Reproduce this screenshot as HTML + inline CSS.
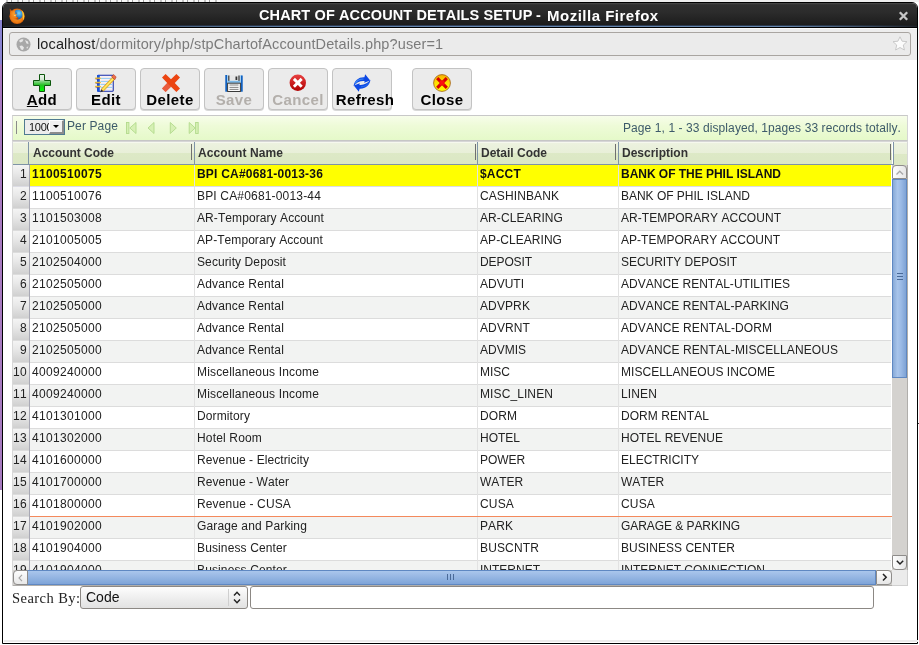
<!DOCTYPE html>
<html><head><meta charset="utf-8">
<style>
*{margin:0;padding:0;box-sizing:border-box}
html,body{width:919px;height:645px;overflow:hidden;background:#fff;font-family:"Liberation Sans",sans-serif;font-kerning:none}
body{position:relative}
#wrap{position:absolute;left:0;top:0;width:919px;height:645px;overflow:hidden;will-change:transform}
.a{position:absolute}
#purple{left:0;top:20px;width:2px;height:470px;background:linear-gradient(#8a84d2 0,#8a84d2 44px,#a87ac0 45px,#a67abf 100%)}
#bgtop{left:0;top:14px;width:2px;height:1px;background:#bbb}
#win{left:2px;top:2px;width:916px;height:642px;border:1px solid #000;border-radius:6px 6px 0 0;background:#fff}
#title{left:3px;top:3px;width:914px;height:22px;background:linear-gradient(#505050 0,#3a3a3a 1px,#2f2f2f 2px,#2c2c2c 40%,#1c1c1c 100%);border-radius:5px 5px 0 0}
#tline{left:3px;top:25px;width:914px;height:1px;background:linear-gradient(90deg,#1c1e20,#263040 20%,#30405a 50%,#2a384a 90%,#1c1e20)}
#tline2{left:3px;top:26px;width:914px;height:1px;background:linear-gradient(90deg,#20242a,#3a4a60 8%,#5a7aa0 30%,#6888b0 50%,#6686ae 85%,#3a4a60 95%,#20242a)}
#tblk{left:3px;top:27px;width:914px;height:1px;background:#000}
.tt{top:7px;color:#fff;font-weight:bold;font-size:14.5px;line-height:17px;white-space:nowrap}
#urlarea{left:3px;top:28px;width:914px;height:32px;background:#ededed;border-top:1px solid #fbfbfb}
#url{left:9px;top:32px;width:902px;height:24px;border:1px solid #a9a5a1;border-radius:3px;background:#ebebeb}
#urltxt{left:37px;top:35px;line-height:18px;font-size:14.5px;letter-spacing:0.13px;color:#1e1e1e;white-space:nowrap}
#urltxt span{color:#7b7b7b}
#status{left:4px;top:640px;width:914px;height:2px;background:#ebebeb}
.btn{position:absolute;top:68px;height:42px;width:60px;border:1px solid #c3c3c3;border-radius:4px;background:#ebebeb;box-shadow:0 1px 0 #d8d8d8}
.lbl{position:absolute;top:91px;text-align:center;font-weight:bold;font-size:15px;letter-spacing:0.4px;color:#000;line-height:17px;white-space:nowrap}
.lbl.dis{color:#b3afab}
#pager{left:12px;top:115px;width:896px;height:26px;background:linear-gradient(#f7fdea,#eefbd8 40%,#e5f9c9);border-top:1px solid #c8c8c8;border-bottom:1px solid #c6c6c6;border-left:1px solid #d6d6d6;border-right:1px solid #d6d6d6}
#psep{left:16px;top:121px;width:1px;height:13px;background:#8a8a8a}
#sel{left:24px;top:119px;width:41px;height:16px;border:1px solid #4f7a90;background:#ececec;overflow:hidden}
#selv{left:29px;top:121px;font-size:11px;letter-spacing:-0.3px;line-height:13px;color:#111;width:20px;overflow:hidden;white-space:nowrap}
#seldd{left:49px;top:120px;width:15px;height:14px;background:#f0f0f0;border-top:1px solid #fff;border-left:1px solid #fff;border-right:2px solid #8c8c8c;border-bottom:2px solid #8c8c8c}
#seltri{left:53px;top:125px;width:0;height:0;border-left:3px solid transparent;border-right:3px solid transparent;border-top:3px solid #000}
#pp{left:67px;top:118px;font-size:12px;color:#3d5a6a;line-height:16px;white-space:nowrap}
#info{left:623px;top:120px;font-size:12px;color:#3d5a6a;line-height:16px;white-space:nowrap}
#gridbg{left:12px;top:141px;width:896px;height:445px;background:#fff;border-left:1px solid #d8d8d8;border-right:1px solid #d8d8d8;border-top:1px solid #d6d6d6}
.hg{position:absolute;top:142px;height:22px;background:linear-gradient(#f6f8ee 0,#f6f8ee 4.5%,#ecf2df 5%,#e8efd8 50%,#dde9c6 51%,#dbe7c4 100%)}
#hline{left:13px;top:164px;width:880px;height:1px;background:#7e93a6}
.hc{position:absolute;top:142px;height:22px;font-weight:bold;font-size:12px;color:#333;line-height:22px;white-space:nowrap}
.vs{position:absolute;width:1px;background:#7f94a7}
.row>.bs{position:absolute;top:0;width:1px;height:22px;background:#e2e2e2}
.row>.bs:nth-of-type(6){background:#a8a8b4}
.hm{position:absolute;top:144px;width:1px;height:16px;background:#6f6f6f}
.row{position:absolute;left:13px;width:878px;height:22px;border-bottom:1px solid #dcdcdc;font-size:12px;color:#222;line-height:18px}
.row.alt{background:#f2f3f2}
.row.sel{background:#ffff00;font-weight:bold;color:#111;border-bottom-color:#dcdce4}
.row>div{position:absolute;top:0;height:21px;white-space:nowrap;overflow:hidden}
.rn{left:0;width:16px;text-align:right;padding-right:2px;background:linear-gradient(#f4f4f4,#e8e8e8 40%,#d0d0d0);color:#222;font-weight:normal}
.c1{left:19px;width:161px}
.c2{left:184px;width:279px}
.c3{left:467px;width:137px}
.c4{left:608px;width:270px}
#vtrack{left:892px;top:165px;width:16px;height:405px;background:#d4d2cf;border-right:1px solid #b0aeab}
#vup{left:892px;top:165px;width:15px;height:14px;background:linear-gradient(90deg,#fdfdfd,#e6e6e6);border:1px solid #8e8c8a;border-radius:4px 4px 1px 1px}
#vthumb{left:892px;top:179px;width:15px;height:199px;background:linear-gradient(90deg,#88aad8,#a8c4ea 35%,#9cbbe6 60%,#7fa3d5);border:1px solid #5f88c2}
#vdown{left:892px;top:555px;width:15px;height:15px;background:linear-gradient(90deg,#fdfdfd,#e6e6e6);border:1px solid #8e8c8a;border-radius:1px 1px 4px 4px}
#htrack{left:13px;top:570px;width:879px;height:16px;background:#d4d2cf;border-bottom:1px solid #b0aeab}
#hleft{left:13px;top:570px;width:15px;height:15px;background:linear-gradient(#fdfdfd,#e8e8e8);border:1px solid #8e8c8a;border-radius:4px 1px 1px 4px}
#hthumb{left:27px;top:570px;width:849px;height:15px;background:linear-gradient(#aac6ec,#94b5e2 50%,#7ea4d8);border:1px solid #5f88c2}
#hright{left:876px;top:570px;width:16px;height:15px;background:linear-gradient(#fdfdfd,#e6e6e6);border:1px solid #8e8c8a;border-radius:1px 4px 4px 1px}
#corner{left:892px;top:570px;width:16px;height:16px;background:#ebebeb;border-right:1px solid #d0d0d0;border-bottom:1px solid #d0d0d0}
#sb{left:12px;top:590px;font-family:"Liberation Serif",serif;font-size:14.5px;letter-spacing:0.45px;color:#222;line-height:16px;white-space:nowrap}
#scode{left:80px;top:586px;width:168px;height:23px;border:1px solid #8c8884;border-radius:3px;background:linear-gradient(#fdfdfd,#ececec 60%,#e2e2e2)}
#scodet{left:86px;top:589px;font-size:14px;color:#111;line-height:16px}
#ssep{left:228px;top:589px;width:1px;height:17px;background:#cfcfcf}
#sinput{left:250px;top:586px;width:624px;height:23px;border:1px solid #8c8884;border-radius:3px;background:#fff}
svg{position:absolute;overflow:visible}
</style></head>
<body><div id="wrap">
<div class="a" id="purple"></div>
<div class="a" style="left:6px;top:0;width:214px;height:2px;background:repeating-linear-gradient(90deg,#c4c4c4 0,#c4c4c4 2px,#fafafa 2px,#fafafa 5px,#a0a0a0 5px,#a0a0a0 6px,#f6f6f6 6px,#f6f6f6 11px)"></div>
<div class="a" style="left:220px;top:0;width:699px;height:2px;background:#efefef"></div>
<div class="a" id="win"></div>
<div class="a" style="left:918px;top:423px;width:1px;height:1px;background:#333"></div>
<div class="a" id="title"></div>
<div class="a" id="tline"></div>
<div class="a" id="tline2"></div>
<div class="a" id="tblk"></div>
<div class="a tt" style="left:259px;letter-spacing:0.12px">CHART OF ACCOUNT DETAILS SETUP</div>
<div class="a tt" style="left:536px">-</div>
<div class="a tt" style="left:547px;font-size:15px;letter-spacing:0.5px">Mozilla Firefox</div>
<svg style="left:9px;top:8px" width="16" height="16" viewBox="0 0 16 16">
 <defs>
  <radialGradient id="ffb" cx="0.6" cy="0.35" r="0.7"><stop offset="0" stop-color="#70d4fa"/><stop offset="0.55" stop-color="#2e86d0"/><stop offset="1" stop-color="#17468e"/></radialGradient>
  <radialGradient id="ffo" cx="0.5" cy="0.5" r="0.55"><stop offset="0" stop-color="#f8a030"/><stop offset="0.75" stop-color="#ec7a12"/><stop offset="1" stop-color="#c04a00"/></radialGradient>
 </defs>
 <circle cx="8.1" cy="8.2" r="7.7" fill="url(#ffo)"/>
 <circle cx="9" cy="6.6" r="4.8" fill="url(#ffb)"/>
 <path d="M12.6 2.2 C15.4 4.6 16 9 14.2 12.2 C13.6 10 14 6 12.6 2.2Z" fill="#ffcc30"/>
 <path d="M0.8 0.4 L3.4 3.4 L5.2 2.4 L6.6 4.2 L5.6 5.6 L7.8 6.2 L7 8.4 L9.4 9.8 L8.8 11.4 L5 11 L2.6 8.6 L1 5.4Z" fill="url(#ffo)"/>
 <path d="M4.6 7.4 L6.8 7.1 L6.2 8.2Z" fill="#ffe8a0"/>
 <path d="M6.6 4.2 L7.8 5 L7 5.8Z" fill="#701a00"/>
</svg>
<svg style="left:898px;top:11px" width="11" height="10" viewBox="0 0 11 10"><path d="M1.8 1.2L9.2 8.8M9.2 1.2L1.8 8.8" stroke="#c6c6c6" stroke-width="2.3"/></svg>
<div class="a" id="urlarea"></div>
<div class="a" id="url"></div>
<svg style="left:16px;top:37px" width="15" height="15" viewBox="0 0 15 15">
 <circle cx="7.5" cy="7.5" r="7" fill="#a8a8a8"/>
 <path d="M3 4 C4 2.5,6 2,7.5 2.5 L6.5 4.5 L4.5 5.5Z M9 3 L12 4.5 L12.5 7 L10.5 6.5Z M3.5 9 L6 8.5 L8 10.5 L7 13 L5 12.5Z M10.5 10 L12.5 9.5 L11 12Z" fill="#e6e6e6"/>
</svg>
<div class="a" id="urltxt">localhost<span>/dormitory/php/stpChartofAccountDetails.php?user=1</span></div>
<svg style="left:892px;top:36px" width="16" height="15" viewBox="0 0 16 15">
 <path d="M8 0.8 L10.1 5.2 L15 5.7 L11.3 9 L12.4 14 L8 11.5 L3.6 14 L4.7 9 L1 5.7 L5.9 5.2Z" fill="#fbfbfb" stroke="#c4c4c4" stroke-width="0.9" stroke-linejoin="round"/>
</svg>
<div class="a" id="status"></div>

<div class="btn" style="left:12px"></div>
<div class="btn" style="left:76px"></div>
<div class="btn" style="left:140px"></div>
<div class="btn" style="left:204px"></div>
<div class="btn" style="left:268px"></div>
<div class="btn" style="left:332px"></div>
<div class="btn" style="left:412px"></div>
<div class="lbl" style="left:12px;width:60px"><u style="text-decoration-thickness:1px;text-underline-offset:0.5px">A</u>dd</div>
<div class="lbl" style="left:76px;width:60px">Edit</div>
<div class="lbl" style="left:140px;width:60px">Delete</div>
<div class="lbl dis" style="left:204px;width:60px">Save</div>
<div class="lbl dis" style="left:268px;width:60px">Cancel</div>
<div class="lbl" style="left:334px;width:62px">Refresh</div>
<div class="lbl" style="left:412px;width:60px">Close</div>

<svg style="left:33px;top:74px" width="18" height="18" viewBox="0 0 18 18">
 <defs><linearGradient id="gp" x1="0" y1="0" x2="0" y2="1"><stop offset="0" stop-color="#f0f6f0"/><stop offset="0.33" stop-color="#d0e6d0"/><stop offset="0.36" stop-color="#98d898"/><stop offset="0.62" stop-color="#22c022"/><stop offset="1" stop-color="#00ff00"/></linearGradient></defs>
 <path d="M6.5 0.5h5v6h6v5h-6v6h-5v-6h-6v-5h6z" fill="url(#gp)" stroke="#0c560c" stroke-width="1"/>
</svg>
<svg style="left:95px;top:73px" width="22" height="20" viewBox="0 0 22 20">
 <rect x="2.6" y="2.3" width="15.6" height="16" rx="0.8" fill="#f4faff" stroke="#1428a8" stroke-width="1.1"/>
 <path d="M5.5 5.5H17.5M5.5 8.5H17.5M5.5 11.5H17.5M5.5 14.5H17.5" stroke="#9ccff4" stroke-width="1"/>
 <path d="M5.5 4.2H17.5M5.5 7.2H17.5M5.5 10.2H17.5M5.5 13.2H17.5M5.5 16.2H17.5" stroke="#f0d0d0" stroke-width="0.6"/>
 <rect x="2.2" y="2" width="2.6" height="16.6" fill="#1656e0"/>
 <path d="M0.6 5.2H5.2M0.6 9.4H5.2M0.6 13.6H5.2" stroke="#e8c030" stroke-width="1.5" stroke-linecap="round"/>
 <path d="M0.6 6.2H4.5M0.6 10.4H4.5M0.6 14.6H4.5" stroke="#6a3a80" stroke-width="0.6"/>
 <path d="M6.2 16.2 L17.2 4.4 L19.4 6.6 L8.4 18.2 Z" fill="#f8d838" stroke="#d08018" stroke-width="0.6"/>
 <path d="M7.3 17.2 L18.3 5.5" stroke="#ffef90" stroke-width="0.8"/>
 <path d="M16.6 3.6 L18.6 1.4 L21.2 4 L19.8 6.8 Z" fill="#f07048" stroke="#a03020" stroke-width="0.5"/>
 <path d="M6.2 16.2 L8.4 18.2 L5.4 19.2Z" fill="#303030"/>
</svg>
<svg style="left:162px;top:74px" width="18" height="18" viewBox="0 0 18 18">
 <path d="M0 3.6 L3.6 0 L9 5.2 L14.4 0 L18 3.6 L12.8 9 L18 14.4 L14.4 18 L9 12.8 L3.6 18 L0 14.4 L5.2 9Z" fill="#ec4512"/>
 <path d="M0 14.4 L5.2 9 L9 12.8 L3.6 18Z" fill="#e86a5a" opacity="0.6"/>
</svg>
<svg style="left:225px;top:74px" width="18" height="18" viewBox="0 0 18 18">
 <rect x="0.8" y="1" width="16.4" height="16.5" fill="#b8dcf4"/>
 <rect x="0.3" y="1" width="1.8" height="16.7" fill="#1060c0"/>
 <rect x="15.9" y="1.5" width="1.8" height="16.2" fill="#1060c0"/>
 <rect x="3.2" y="1" width="11.6" height="6" fill="#e6e6e6"/>
 <rect x="3.2" y="1.5" width="1.2" height="5.5" fill="#333"/>
 <rect x="13.4" y="1.5" width="1.2" height="5.5" fill="#333"/>
 <rect x="10.5" y="2.5" width="1.8" height="3.5" fill="#333"/>
 <rect x="2.8" y="6.8" width="12.4" height="2" fill="#7ab8e8"/>
 <rect x="2.6" y="9.2" width="12.8" height="8.3" fill="#fafafa" stroke="#3a3a3a" stroke-width="1"/>
 <path d="M4.5 11H13.5M4.5 13.4H13.5M4.5 15.4H13.5" stroke="#666" stroke-width="0.8"/>
</svg>
<svg style="left:289px;top:74px" width="18" height="18" viewBox="0 0 18 18">
 <defs><linearGradient id="gr" x1="0" y1="0" x2="0" y2="1"><stop offset="0" stop-color="#e84040"/><stop offset="1" stop-color="#b00000"/></linearGradient></defs>
 <circle cx="8.8" cy="8.8" r="8.2" fill="url(#gr)"/>
 <path d="M4.9 4.9L12.7 12.7M12.7 4.9L4.9 12.7" stroke="#fff" stroke-width="2.9"/>
</svg>
<svg style="left:353px;top:74px" width="18" height="18" viewBox="0 0 18 18">
 <path d="M0.6 12.2 C1.2 6.5, 5.8 3, 11.4 3.3 L12.2 0.2 L17.2 6.6 L11.2 8.8 L11.6 7.1 C7.5 6.6, 3.4 8.4, 0.6 12.2 Z" fill="#0d48e4"/>
 <path d="M17.4 5.8 C16.8 11.5, 12.2 15, 6.6 14.7 L5.8 17.8 L0.8 11.4 L6.8 9.2 L6.4 10.9 C10.5 11.4, 14.6 9.6, 17.4 5.8 Z" fill="#0d48e4"/>
 <path d="M2.2 9.6 C3.5 6.8, 6.5 5, 10.5 5" stroke="#3d8cf6" stroke-width="1.2" fill="none"/>
 <path d="M8 12.8 C11 12.8, 14 11.5, 15.5 9" stroke="#2a70f0" stroke-width="1" fill="none"/>
</svg>
<svg style="left:433px;top:74px" width="18" height="18" viewBox="0 0 18 18">
 <defs><linearGradient id="gy" x1="0" y1="0" x2="0" y2="1"><stop offset="0" stop-color="#f8b000"/><stop offset="0.5" stop-color="#ffe000"/><stop offset="1" stop-color="#ffff00"/></linearGradient></defs>
 <circle cx="9" cy="9" r="8.4" fill="url(#gy)" stroke="#a86a20" stroke-width="0.9"/>
 <path d="M4.2 4.2L13.8 13.8M13.8 4.2L4.2 13.8" stroke="#d80000" stroke-width="3.1"/>
 <path d="M7 7L11 11M11 7L7 11" stroke="#ff1010" stroke-width="2"/>
</svg>

<div class="a" id="pager"></div>
<div class="a" id="psep"></div>
<div class="a" id="sel"></div>
<div class="a" id="selv">1000</div>
<div class="a" id="seldd"></div>
<div class="a" id="seltri"></div>
<div class="a" id="pp"><span style="letter-spacing:0.121px">Per Page</span></div>
<svg style="left:126px;top:122px" width="74" height="12" viewBox="0 0 74 12">
 <g fill="#d6f0b4" stroke="#b2da8c" stroke-width="0.9">
  <rect x="0.5" y="0.5" width="2.4" height="11"/>
  <path d="M10 0.5 L10 11.5 L3.8 6Z"/>
  <path d="M28 0.5 L28 11.5 L22 6Z"/>
  <path d="M44.3 0.5 L44.3 11.5 L50.3 6Z"/>
  <path d="M63.2 0.5 L63.2 11.5 L69.2 6Z"/>
  <rect x="69.6" y="0.5" width="2.6" height="11"/>
 </g>
</svg>
<div class="a" id="info"><span style="letter-spacing:0.086px">Page 1, 1 - 33 displayed, 1pages 33 records totally.</span></div>

<div class="a" id="gridbg"></div>
<div class="hg" style="left:13px;width:879px"></div>
<div class="hg" style="left:894px;width:13px;height:23px"></div>
<div class="a" id="hline"></div>
<div class="hc" style="left:33px"><span style="letter-spacing:-0.028px">Account Code</span></div>
<div class="hc" style="left:198px"><span style="letter-spacing:0.082px">Account Name</span></div>
<div class="hc" style="left:481px"><span style="letter-spacing:-0.001px">Detail Code</span></div>
<div class="hc" style="left:622px"><span style="letter-spacing:-0.001px">Description</span></div>

<div class="a" style="left:0;top:0;width:919px;height:570px;overflow:hidden"><div class="row sel" style="top:165px"><div class="rn"><span style="letter-spacing:0.326px">1</span></div><div class="c1"><span style="letter-spacing:0.326px">1100510075</span></div><div class="c2"><span style="letter-spacing:0.207px">BPI CA#0681-0013-36</span></div><div class="c3"><span style="letter-spacing:0.200px">$ACCT</span></div><div class="c4"><span style="letter-spacing:-0.029px">BANK OF THE PHIL ISLAND</span></div><div class="bs" style="left:16px"></div><div class="bs" style="left:181px"></div><div class="bs" style="left:464px"></div><div class="bs" style="left:605px"></div></div>
<div class="row" style="top:187px"><div class="rn"><span style="letter-spacing:0.326px">2</span></div><div class="c1"><span style="letter-spacing:0.326px">1100510076</span></div><div class="c2"><span style="letter-spacing:0.171px">BPI CA#0681-0013-44</span></div><div class="c3"><span style="letter-spacing:0.098px">CASHINBANK</span></div><div class="c4"><span style="letter-spacing:-0.019px">BANK OF PHIL ISLAND</span></div><div class="bs" style="left:16px"></div><div class="bs" style="left:181px"></div><div class="bs" style="left:464px"></div><div class="bs" style="left:605px"></div></div>
<div class="row alt" style="top:209px"><div class="rn"><span style="letter-spacing:0.326px">3</span></div><div class="c1"><span style="letter-spacing:0.326px">1101503008</span></div><div class="c2"><span style="letter-spacing:0.081px">AR-Temporary Account</span></div><div class="c3"><span style="letter-spacing:0.090px">AR-CLEARING</span></div><div class="c4"><span style="letter-spacing:0.033px">AR-TEMPORARY ACCOUNT</span></div><div class="bs" style="left:16px"></div><div class="bs" style="left:181px"></div><div class="bs" style="left:464px"></div><div class="bs" style="left:605px"></div></div>
<div class="row" style="top:231px"><div class="rn"><span style="letter-spacing:0.326px">4</span></div><div class="c1"><span style="letter-spacing:0.326px">2101005005</span></div><div class="c2"><span style="letter-spacing:0.064px">AP-Temporary Account</span></div><div class="c3"><span style="letter-spacing:0.059px">AP-CLEARING</span></div><div class="c4"><span style="letter-spacing:0.016px">AP-TEMPORARY ACCOUNT</span></div><div class="bs" style="left:16px"></div><div class="bs" style="left:181px"></div><div class="bs" style="left:464px"></div><div class="bs" style="left:605px"></div></div>
<div class="row alt" style="top:253px"><div class="rn"><span style="letter-spacing:0.326px">5</span></div><div class="c1"><span style="letter-spacing:0.326px">2102504000</span></div><div class="c2"><span style="letter-spacing:0.102px">Security Deposit</span></div><div class="c3"><span style="letter-spacing:-0.097px">DEPOSIT</span></div><div class="c4"><span style="letter-spacing:-0.043px">SECURITY DEPOSIT</span></div><div class="bs" style="left:16px"></div><div class="bs" style="left:181px"></div><div class="bs" style="left:464px"></div><div class="bs" style="left:605px"></div></div>
<div class="row" style="top:275px"><div class="rn"><span style="letter-spacing:0.326px">6</span></div><div class="c1"><span style="letter-spacing:0.326px">2102505000</span></div><div class="c2"><span style="letter-spacing:0.163px">Advance Rental</span></div><div class="c3"><span style="letter-spacing:-0.001px">ADVUTI</span></div><div class="c4"><span style="letter-spacing:0.013px">ADVANCE RENTAL-UTILITIES</span></div><div class="bs" style="left:16px"></div><div class="bs" style="left:181px"></div><div class="bs" style="left:464px"></div><div class="bs" style="left:605px"></div></div>
<div class="row alt" style="top:297px"><div class="rn"><span style="letter-spacing:0.326px">7</span></div><div class="c1"><span style="letter-spacing:0.326px">2102505000</span></div><div class="c2"><span style="letter-spacing:0.163px">Advance Rental</span></div><div class="c3"><span style="letter-spacing:0.109px">ADVPRK</span></div><div class="c4"><span style="letter-spacing:0.059px">ADVANCE RENTAL-PARKING</span></div><div class="bs" style="left:16px"></div><div class="bs" style="left:181px"></div><div class="bs" style="left:464px"></div><div class="bs" style="left:605px"></div></div>
<div class="row" style="top:319px"><div class="rn"><span style="letter-spacing:0.326px">8</span></div><div class="c1"><span style="letter-spacing:0.326px">2102505000</span></div><div class="c2"><span style="letter-spacing:0.163px">Advance Rental</span></div><div class="c3"><span style="letter-spacing:0.111px">ADVRNT</span></div><div class="c4"><span style="letter-spacing:0.087px">ADVANCE RENTAL-DORM</span></div><div class="bs" style="left:16px"></div><div class="bs" style="left:181px"></div><div class="bs" style="left:464px"></div><div class="bs" style="left:605px"></div></div>
<div class="row alt" style="top:341px"><div class="rn"><span style="letter-spacing:0.326px">9</span></div><div class="c1"><span style="letter-spacing:0.326px">2102505000</span></div><div class="c2"><span style="letter-spacing:0.163px">Advance Rental</span></div><div class="c3"><span style="letter-spacing:-0.001px">ADVMIS</span></div><div class="c4"><span style="letter-spacing:0.082px">ADVANCE RENTAL-MISCELLANEOUS</span></div><div class="bs" style="left:16px"></div><div class="bs" style="left:181px"></div><div class="bs" style="left:464px"></div><div class="bs" style="left:605px"></div></div>
<div class="row" style="top:363px"><div class="rn"><span style="letter-spacing:0.326px">10</span></div><div class="c1"><span style="letter-spacing:0.326px">4009240000</span></div><div class="c2"><span style="letter-spacing:0.164px">Miscellaneous Income</span></div><div class="c3"><span style="letter-spacing:0.000px">MISC</span></div><div class="c4"><span style="letter-spacing:0.032px">MISCELLANEOUS INCOME</span></div><div class="bs" style="left:16px"></div><div class="bs" style="left:181px"></div><div class="bs" style="left:464px"></div><div class="bs" style="left:605px"></div></div>
<div class="row alt" style="top:385px"><div class="rn"><span style="letter-spacing:0.326px">11</span></div><div class="c1"><span style="letter-spacing:0.326px">4009240000</span></div><div class="c2"><span style="letter-spacing:0.164px">Miscellaneous Income</span></div><div class="c3"><span style="letter-spacing:0.098px">MISC_LINEN</span></div><div class="c4"><span style="letter-spacing:0.131px">LINEN</span></div><div class="bs" style="left:16px"></div><div class="bs" style="left:181px"></div><div class="bs" style="left:464px"></div><div class="bs" style="left:605px"></div></div>
<div class="row" style="top:407px"><div class="rn"><span style="letter-spacing:0.326px">12</span></div><div class="c1"><span style="letter-spacing:0.326px">4101301000</span></div><div class="c2"><span style="letter-spacing:0.111px">Dormitory</span></div><div class="c3"><span style="letter-spacing:0.084px">DORM</span></div><div class="c4"><span style="letter-spacing:0.060px">DORM RENTAL</span></div><div class="bs" style="left:16px"></div><div class="bs" style="left:181px"></div><div class="bs" style="left:464px"></div><div class="bs" style="left:605px"></div></div>
<div class="row alt" style="top:429px"><div class="rn"><span style="letter-spacing:0.326px">13</span></div><div class="c1"><span style="letter-spacing:0.326px">4101302000</span></div><div class="c2"><span style="letter-spacing:0.164px">Hotel Room</span></div><div class="c3"><span style="letter-spacing:-0.002px">HOTEL</span></div><div class="c4"><span style="letter-spacing:0.050px">HOTEL REVENUE</span></div><div class="bs" style="left:16px"></div><div class="bs" style="left:181px"></div><div class="bs" style="left:464px"></div><div class="bs" style="left:605px"></div></div>
<div class="row" style="top:451px"><div class="rn"><span style="letter-spacing:0.326px">14</span></div><div class="c1"><span style="letter-spacing:0.326px">4101600000</span></div><div class="c2"><span style="letter-spacing:0.093px">Revenue - Electricity</span></div><div class="c3"><span style="letter-spacing:-0.067px">POWER</span></div><div class="c4"><span style="letter-spacing:-0.001px">ELECTRICITY</span></div><div class="bs" style="left:16px"></div><div class="bs" style="left:181px"></div><div class="bs" style="left:464px"></div><div class="bs" style="left:605px"></div></div>
<div class="row alt" style="top:473px"><div class="rn"><span style="letter-spacing:0.326px">15</span></div><div class="c1"><span style="letter-spacing:0.326px">4101700000</span></div><div class="c2"><span style="letter-spacing:0.086px">Revenue - Water</span></div><div class="c3"><span style="letter-spacing:-0.066px">WATER</span></div><div class="c4"><span style="letter-spacing:-0.066px">WATER</span></div><div class="bs" style="left:16px"></div><div class="bs" style="left:181px"></div><div class="bs" style="left:464px"></div><div class="bs" style="left:605px"></div></div>
<div class="row" style="top:495px"><div class="rn"><span style="letter-spacing:0.326px">16</span></div><div class="c1"><span style="letter-spacing:0.326px">4101800000</span></div><div class="c2"><span style="letter-spacing:0.140px">Revenue - CUSA</span></div><div class="c3"><span style="letter-spacing:0.165px">CUSA</span></div><div class="c4"><span style="letter-spacing:0.165px">CUSA</span></div><div class="bs" style="left:16px"></div><div class="bs" style="left:181px"></div><div class="bs" style="left:464px"></div><div class="bs" style="left:605px"></div></div>
<div class="row alt" style="top:517px"><div class="rn"><span style="letter-spacing:0.326px">17</span></div><div class="c1"><span style="letter-spacing:0.326px">4101902000</span></div><div class="c2"><span style="letter-spacing:0.144px">Garage and Parking</span></div><div class="c3"><span style="letter-spacing:0.081px">PARK</span></div><div class="c4"><span style="letter-spacing:-0.064px">GARAGE &amp; PARKING</span></div><div class="bs" style="left:16px"></div><div class="bs" style="left:181px"></div><div class="bs" style="left:464px"></div><div class="bs" style="left:605px"></div></div>
<div class="row" style="top:539px"><div class="rn"><span style="letter-spacing:0.326px">18</span></div><div class="c1"><span style="letter-spacing:0.326px">4101904000</span></div><div class="c2"><span style="letter-spacing:0.130px">Business Center</span></div><div class="c3"><span style="letter-spacing:0.143px">BUSCNTR</span></div><div class="c4"><span style="letter-spacing:0.043px">BUSINESS CENTER</span></div><div class="bs" style="left:16px"></div><div class="bs" style="left:181px"></div><div class="bs" style="left:464px"></div><div class="bs" style="left:605px"></div></div>
<div class="row alt" style="top:561px"><div class="rn"><span style="letter-spacing:0.326px">19</span></div><div class="c1"><span style="letter-spacing:0.326px">4101904000</span></div><div class="c2"><span style="letter-spacing:0.130px">Business Center</span></div><div class="c3"><span style="letter-spacing:0.000px">INTERNET</span></div><div class="c4"><span style="letter-spacing:0.000px">INTERNET CONNECTION</span></div><div class="bs" style="left:16px"></div><div class="bs" style="left:181px"></div><div class="bs" style="left:464px"></div><div class="bs" style="left:605px"></div></div>
<div class="a" style="left:30px;top:516px;width:862px;height:1px;background:#f4895c"></div></div>

<div class="vs" style="left:28px;top:142px;height:22px"></div>
<div class="vs" style="left:194px;top:142px;height:22px"></div>
<div class="vs" style="left:477px;top:142px;height:22px"></div>
<div class="vs" style="left:618px;top:142px;height:22px"></div>
<div class="vs" style="left:893px;top:142px;height:23px"></div>
<div class="hm" style="left:191px"></div>
<div class="hm" style="left:475px"></div>
<div class="hm" style="left:615px"></div>
<div class="hm" style="left:890px"></div>

<div class="a" id="vtrack"></div>
<div class="a" id="vthumb"></div>
<div class="a" id="vup"></div>
<div class="a" id="vdown"></div>
<svg style="left:896px;top:170px" width="8" height="5" viewBox="0 0 8 5"><path d="M0.5 4.5L3.8 1.2L7.1 4.5" stroke="#a8a8a8" stroke-width="1.3" fill="none"/></svg>
<svg style="left:896px;top:560px" width="8" height="6" viewBox="0 0 8 6"><path d="M0.8 0.8L4 4L7.2 0.8" stroke="#222" stroke-width="1.5" fill="none"/></svg>
<svg style="left:897px;top:273px" width="6" height="7" viewBox="0 0 6 7"><path d="M0 0.5H6M0 3.5H6M0 6.5H6" stroke="#4a6a98" stroke-width="1"/></svg>
<div class="a" id="htrack"></div>
<div class="a" id="hthumb"></div>
<div class="a" id="hleft"></div>
<div class="a" id="hright"></div>
<div class="a" id="corner"></div>
<svg style="left:18px;top:574px" width="5" height="8" viewBox="0 0 5 8"><path d="M4 0.8L1 4L4 7.2" stroke="#a4a4a4" stroke-width="1.1" fill="none"/></svg>
<svg style="left:882px;top:573px" width="6" height="9" viewBox="0 0 6 9"><path d="M1 1L4.2 4.3L1 7.6" stroke="#222" stroke-width="1.5" fill="none"/></svg>
<svg style="left:447px;top:574px" width="7" height="6" viewBox="0 0 7 6"><path d="M0.5 0V6M3.5 0V6M6.5 0V6" stroke="#4a6a98" stroke-width="1"/></svg>

<div class="a" id="sb">Search By:</div>
<div class="a" id="scode"></div>
<div class="a" id="scodet">Code</div>
<div class="a" id="ssep"></div>
<svg style="left:233px;top:591px" width="8" height="13" viewBox="0 0 8 13"><path d="M1 4.5L4 1.2L7 4.5M1 8.5L4 11.8L7 8.5" stroke="#222" stroke-width="1.4" fill="none"/></svg>
<div class="a" id="sinput"></div>
</div></body></html>
